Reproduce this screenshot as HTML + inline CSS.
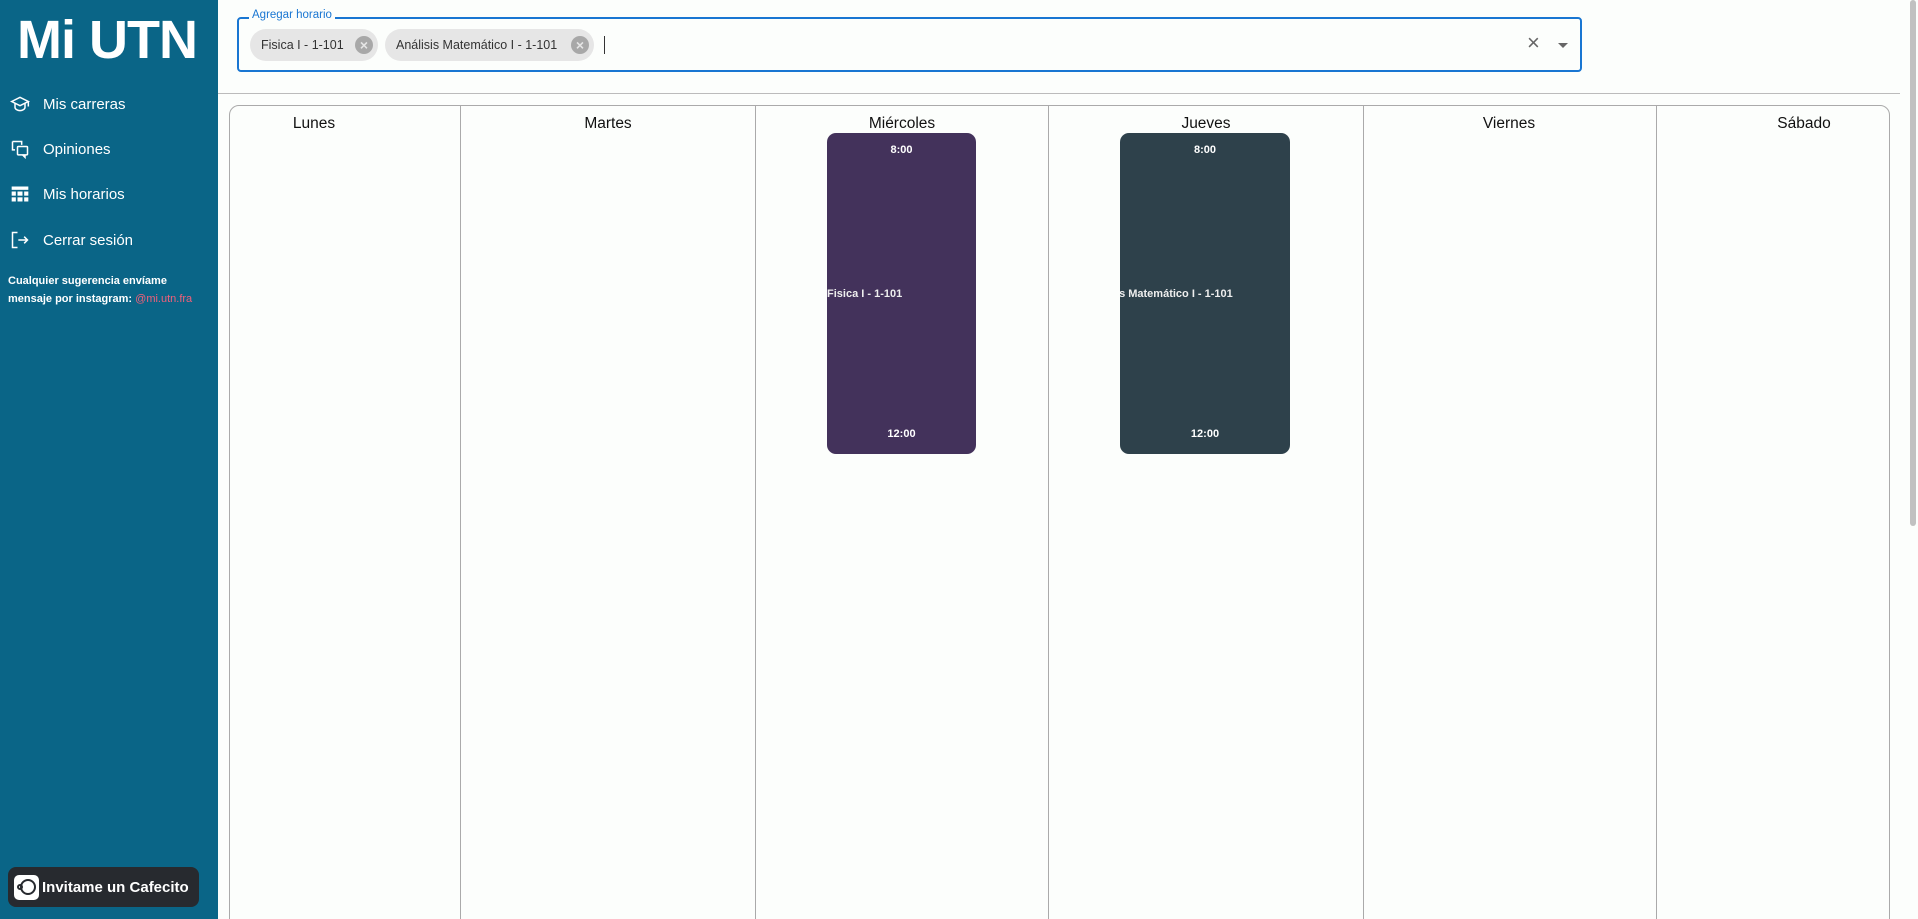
<!DOCTYPE html>
<html><head><meta charset="utf-8"><style>
*{box-sizing:border-box;margin:0;padding:0}
html,body{width:1918px;height:919px;overflow:hidden}
body{background:#fcfefc;font-family:"Liberation Sans",sans-serif}
#w{position:relative;width:1918px;height:919px;overflow:hidden}
.side{position:absolute;left:0;top:0;width:218px;height:919px;background:#0a6587;color:#fff}
.logo{position:absolute;left:17px;top:9px;font-size:54px;font-weight:bold;letter-spacing:-1px}
.nav{position:absolute;left:10px;font-size:15px;display:flex;align-items:center}
.nav svg{width:20px;height:20px;margin-right:13px}
.sug{position:absolute;left:8px;top:272px;font-size:11px;font-weight:bold;line-height:18px;width:205px}
.sug span{color:#f0607a;font-weight:normal}
.caf{position:absolute;left:8px;top:867px;width:191px;height:40px;background:#272a2f;border-radius:8px;display:flex;align-items:center;font-size:15px;font-weight:bold;padding-left:6px}
.caf .ic{width:25px;height:25px;background:#fff;border-radius:5px;margin-right:3px;display:flex;align-items:center;justify-content:center}
.box{position:absolute;left:237px;top:17px;width:1345px;height:55px;border:2px solid #1976d2;border-radius:4px}
.lbl{position:absolute;left:10px;top:-10px;background:#fcfefc;padding:0 3px;font-size:11.5px;color:#1976d2}
.chip{position:absolute;top:10px;height:32px;background:#e6e6e6;border-radius:16px;font-size:12.5px;color:#333;display:flex;align-items:center;padding-left:11px}
.chip .x{position:absolute;right:5px;top:7px;width:18px;height:18px;border-radius:50%;background:#a8a8a8;color:#e6e6e6;font-size:14px;line-height:18px;text-align:center;font-weight:bold}
.hr{position:absolute;left:218px;top:93px;width:1682px;height:1px;background:#bbb}
.sb{position:absolute;left:1910px;top:0;width:6px;height:526px;background:#c1c1c1;border-radius:3px}
.cal{position:absolute;left:229px;top:105px;width:1661px;height:830px;border:1px solid #aaa;border-radius:10px}
.div{position:absolute;top:105px;width:1px;height:814px;background:#aaa}
.hd{position:absolute;top:115px;font-size:15.5px;color:#111;transform:translateX(-50%)}
.ev{position:absolute;top:133px;height:321px;border-radius:9px;color:#fff;font-size:11px;font-weight:bold;overflow:hidden}
.ev .t{position:absolute;width:100%;text-align:center}
.ev .m{position:absolute;top:155px;white-space:nowrap;color:#eee}
</style></head><body><div id="w">
<div class="side">
<div class="logo">Mi UTN</div>
<div class="nav" style="top:94px"><svg viewBox="0 0 24 24" fill="none" stroke="#fff" stroke-width="1.8"><path d="M2 9l10-5 10 5-10 5z"/><path d="M6 11v5c0 2 3 4 6 4s6-2 6-4v-5"/><path d="M22 9v6"/></svg>Mis carreras</div>
<div class="nav" style="top:139px"><svg viewBox="0 0 24 24" fill="none" stroke="#fff" stroke-width="1.8"><path d="M3 3h11v4"/><path d="M3 3v10h3"/><rect x="9" y="9" width="12" height="10" rx="1"/><path d="M18 19v3l-3-3"/></svg>Opiniones</div>
<div class="nav" style="top:184px"><svg viewBox="0 0 24 24" fill="#fff"><rect x="2" y="3" width="20" height="4"/><rect x="2" y="9" width="5" height="5"/><rect x="9" y="9" width="6" height="5"/><rect x="17" y="9" width="5" height="5"/><rect x="2" y="16" width="5" height="5"/><rect x="9" y="16" width="6" height="5"/><rect x="17" y="16" width="5" height="5"/></svg>Mis horarios</div>
<div class="nav" style="top:230px"><svg viewBox="0 0 24 24" fill="none" stroke="#fff" stroke-width="1.8"><path d="M9 3H3v18h6"/><path d="M10 12h11M17 8l4 4-4 4"/></svg>Cerrar sesión</div>
<div class="sug">Cualquier sugerencia envíame mensaje por instagram: <span>@mi.utn.fra</span></div>
<div class="caf"><div class="ic"><svg width="20" height="20" viewBox="0 0 20 20" fill="none" stroke="#272a2f" stroke-width="2"><circle cx="11" cy="10" r="7"/><circle cx="3" cy="10" r="2"/></svg></div>Invitame un Cafecito</div>
</div>
<div class="box">
<div class="lbl">Agregar horario</div>
<div class="chip" style="left:11px;width:128px">Fisica I - 1-101<div class="x">×</div></div>
<div class="chip" style="left:146px;width:209px">Análisis Matemático I - 1-101<div class="x">×</div></div>
<div style="position:absolute;left:365px;top:17px;width:1px;height:18px;background:#333"></div>
<div style="position:absolute;left:1288px;top:11px;font-size:22px;color:#666">×</div>
<div style="position:absolute;left:1319px;top:24px;border:5px solid transparent;border-top:5px solid #666"></div>
</div>
<div class="hr"></div>
<div class="sb"></div>
<div class="cal"></div>
<div class="div" style="left:460px"></div>
<div class="div" style="left:755px"></div>
<div class="div" style="left:1048px"></div>
<div class="div" style="left:1363px"></div>
<div class="div" style="left:1656px"></div>
<div class="hd" style="left:314px">Lunes</div>
<div class="hd" style="left:608px">Martes</div>
<div class="hd" style="left:902px">Miércoles</div>
<div class="hd" style="left:1206px">Jueves</div>
<div class="hd" style="left:1509px">Viernes</div>
<div class="hd" style="left:1804px">Sábado</div>
<div class="ev" style="left:827px;width:149px;background:#43325b"><div class="t" style="top:11px">8:00</div><div class="m" style="left:0">Fisica I - 1-101</div><div class="t" style="top:295px">12:00</div></div>
<div class="ev" style="left:1120px;width:170px;background:#2e414b"><div class="t" style="top:11px">8:00</div><div class="m" style="left:-37px">Análisis Matemático I - 1-101</div><div class="t" style="top:295px">12:00</div></div>
</div></body></html>
